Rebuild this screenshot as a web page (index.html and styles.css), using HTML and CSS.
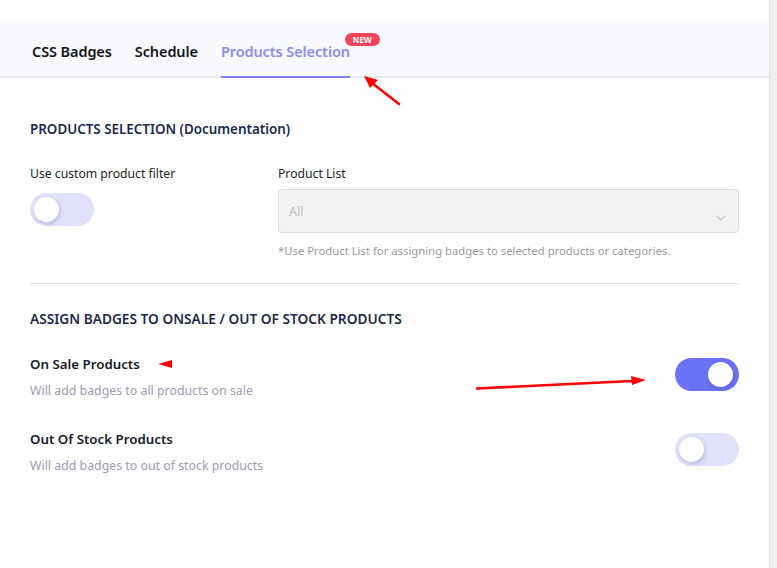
FILE: index.html
```html
<!DOCTYPE html>
<html>
<head>
<meta charset="utf-8">
<link rel="stylesheet" href="styles.css">
</head>
<body>
<div class="page">
  <div class="main">
    <div class="topgap"></div>
    <nav class="tabs">
      <div class="tab">CSS Badges</div>
      <div class="tab">Schedule</div>
      <div class="tab active">Products Selection<span class="badge-new">NEW</span></div>
    </nav>
    <div class="content">
      <h2 class="section-title">PRODUCTS SELECTION (Documentation)</h2>
      <div class="filter-row">
        <div class="col-left">
          <div class="label">Use custom product filter</div>
          <div class="toggle"><span class="knob"></span></div>
        </div>
        <div class="col-right">
          <div class="label">Product List</div>
          <div class="select">
            <span class="select-value">All</span>
            <svg class="chev" width="10" height="6" viewBox="0 0 10 6"><path d="M1 1 L5 5 L9 1" fill="none" stroke="#c4c4c4" stroke-width="1.3"/></svg>
          </div>
          <div class="help">*Use Product List for assigning badges to selected products or categories.</div>
        </div>
      </div>
      <hr class="divider">
      <h2 class="section-title second">ASSIGN BADGES TO ONSALE / OUT OF STOCK PRODUCTS</h2>
      <div class="opt-row">
        <div class="opt-text">
          <div class="opt-title">On Sale Products</div>
          <div class="opt-desc">Will add badges to all products on sale</div>
        </div>
        <div class="toggle on"><span class="knob"></span></div>
      </div>
      <div class="opt-row second">
        <div class="opt-text">
          <div class="opt-title">Out Of Stock Products</div>
          <div class="opt-desc">Will add badges to out of stock products</div>
        </div>
        <div class="toggle"><span class="knob"></span></div>
      </div>
    </div>
  </div>
  <div class="scroll-strip"></div>
  <svg class="annot" width="777" height="568" viewBox="0 0 777 568">
    <line x1="399" y1="104" x2="372" y2="83" stroke="#f00" stroke-width="2.6" stroke-linecap="round"/>
    <polygon points="364,76 378,80 370,88" fill="#f00"/>
    <polygon points="158,364 172,360 172,368" fill="#f00"/>
    <line x1="477" y1="388.5" x2="632" y2="381" stroke="#f00" stroke-width="2.6" stroke-linecap="round"/>
    <polygon points="646,380 631,376 632,385" fill="#f00"/>
  </svg>
</div>
</body>
</html>
```
FILE: styles.css
```css
* { box-sizing: border-box; }
html, body { margin: 0; padding: 0; background: #fff; }
body {
  font-family: "Noto Sans", "Open Sans", "DejaVu Sans", sans-serif;
  color: #1e1e24;
}
.page {
  position: relative;
  display: flex;
  width: 777px;
  height: 568px;
  overflow: hidden;
}
.main { flex: 1; }
.topgap { height: 23px; }
.tabs {
  display: flex;
  gap: 23px;
  height: 55px;
  padding-left: 32px;
  background: #f9fafe;
  border-bottom: 2px solid #e6e7ee;
}
.tab {
  position: relative;
  display: flex;
  align-items: center;
  padding-top: 3px;
  font-size: 14.5px;
  font-weight: 600;
  color: #14141c;
  letter-spacing: -0.1px;
}
.tab.active {
  color: #8a8cf2;
  border-bottom: 2px solid #8182f0;
  margin-bottom: -2px;
  padding-top: 3px;
}
.badge-new {
  position: absolute;
  top: 10px;
  right: -30px;
  width: 35px;
  height: 13px;
  border-radius: 7px;
  background: #f4435c;
  color: #fff;
  font-size: 8px;
  font-weight: 700;
  line-height: 13px;
  text-align: center;
  letter-spacing: 0.2px;
}
.content { padding: 0 30px; }
.section-title {
  margin: 42px 0 0;
  font-size: 13.4px;
  font-weight: 600;
  line-height: 18px;
  color: #1b2a4c;
}
.filter-row { display: flex; margin-top: 27px; }
.col-left { width: 248px; }
.col-right { flex: 1; }
.label {
  font-size: 12.2px;
  line-height: 18px;
  color: #1e1e24;
}
.col-left .toggle { margin-top: 10px; }
.select {
  display: flex;
  align-items: center;
  justify-content: space-between;
  margin-top: 6px;
  height: 44px;
  padding: 0 12px 0 10px;
  background: #f3f3f3;
  border: 1px solid #dcdcdc;
  border-radius: 4px;
}
.select-value { font-size: 12.5px; color: #b8b8b8; margin-top: 0; }
.chev { margin-top: 13px; }
.help {
  margin-top: 10px;
  font-size: 11.3px;
  line-height: 16px;
  color: #9a9a9a;
}
.divider {
  margin: 24px 0 0;
  border: 0;
  border-top: 1px solid #e3e3e3;
}
.section-title.second { margin-top: 26px; font-size: 13.7px; }
.opt-row {
  display: flex;
  justify-content: space-between;
  align-items: flex-start;
  margin-top: 27px;
}
.opt-row.second { margin-top: 31px; }
.opt-row .toggle { margin-top: 3px; }
.opt-title {
  font-size: 13.3px;
  font-weight: 600;
  line-height: 18px;
  color: #161a2c;
}
.opt-desc {
  margin-top: 10px;
  font-size: 12.35px;
  line-height: 16px;
  color: #9c9db2;
}
.toggle {
  position: relative;
  width: 64px;
  height: 33px;
  border-radius: 17px;
  background: #e1e1fc;
}
.toggle .knob {
  position: absolute;
  top: 4px;
  left: 4px;
  width: 25px;
  height: 25px;
  border-radius: 50%;
  background: #fff;
  box-shadow: 1px 2px 4px rgba(60, 60, 120, 0.25);
}
.toggle.on { background: #6c72f5; }
.toggle.on .knob { left: 33px; }
.scroll-strip {
  width: 8px;
  background: #f0f0f0;
  border-left: 1px solid #e2e2e2;
}
.annot { position: absolute; left: 0; top: 0; pointer-events: none; }
```
